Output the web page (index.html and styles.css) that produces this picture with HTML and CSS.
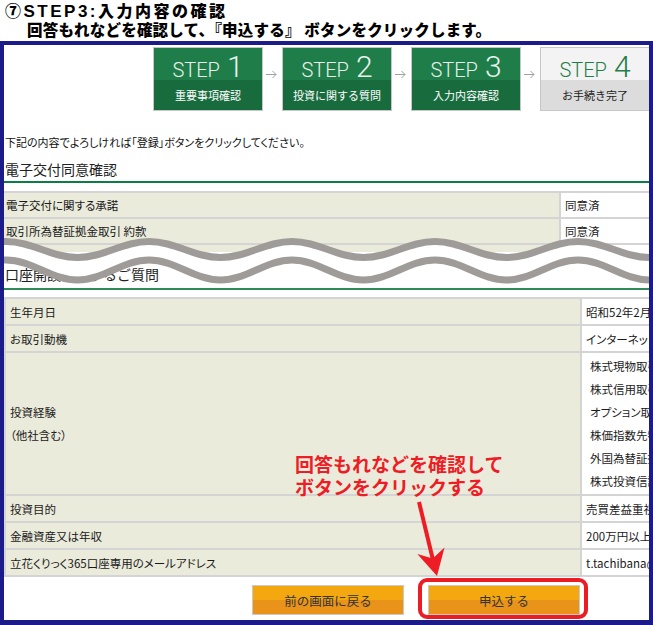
FILE: index.html
```html
<!DOCTYPE html>
<html lang="ja">
<head>
<meta charset="utf-8">
<title>STEP3 入力内容の確認</title>
<link rel="stylesheet" href="styles.css">
</head>
<body>
<header class="title">
  <div class="t-line1">⑦<span class="t-latin">STEP3:</span>入力内容の確認</div>
  <div class="t-line2">回答もれなどを確認して、『申込する』 ボタンをクリックします。</div>
</header>
<main class="frame">
  <div class="steps">
    <div class="step"><div class="step-top"><span class="step-word">STEP</span>1</div><div class="step-bottom">重要事項確認</div></div>
    <svg class="step-arrow" viewBox="0 0 19 64"><path d="M3 27.5H13M9.5 24L13 27.5L9.5 31" fill="none" stroke="#a0a0a0" stroke-width="1"/></svg>
    <div class="step"><div class="step-top"><span class="step-word">STEP</span>2</div><div class="step-bottom">投資に関する質問</div></div>
    <svg class="step-arrow" viewBox="0 0 19 64"><path d="M3 27.5H13M9.5 24L13 27.5L9.5 31" fill="none" stroke="#a0a0a0" stroke-width="1"/></svg>
    <div class="step"><div class="step-top"><span class="step-word">STEP</span>3</div><div class="step-bottom">入力内容確認</div></div>
    <svg class="step-arrow" viewBox="0 0 19 64"><path d="M3 27.5H13M9.5 24L13 27.5L9.5 31" fill="none" stroke="#a0a0a0" stroke-width="1"/></svg>
    <div class="step todo"><div class="step-top"><span class="step-word">STEP</span>4</div><div class="step-bottom">お手続き完了</div></div>
  </div>

  <p class="intro">下記の内容でよろしければ「登録」ボタンをクリックしてください。</p>

  <h2 class="sec">電子交付同意確認</h2>
  <div class="tbl t1">
    <div class="row"><div class="lab">電子交付に関する承諾</div><div class="val">同意済</div></div>
    <div class="row"><div class="lab">取引所為替証拠金取引 約款</div><div class="val">同意済</div></div>
    <div class="row partial"><div class="lab"></div><div class="val"></div></div>
  </div>

  <h2 class="sec sec2">口座開設に関するご質問</h2>
  <div class="tbl t2">
    <div class="row"><div class="lab">生年月日</div><div class="val">昭和52年2月1日</div></div>
    <div class="row"><div class="lab">お取引動機</div><div class="val">インターネット取引の利便性</div></div>
    <div class="row tall">
      <div class="lab"><div>投資経験<br>（他社含む）</div></div>
      <div class="val list">
        <div>株式現物取引</div>
        <div>株式信用取引</div>
        <div>オプション取引</div>
        <div>株価指数先物取引</div>
        <div>外国為替証拠金取引</div>
        <div>株式投資信託</div>
      </div>
    </div>
    <div class="row"><div class="lab">投資目的</div><div class="val">売買差益重視</div></div>
    <div class="row"><div class="lab">金融資産又は年収</div><div class="val">200万円以上500万円未満</div></div>
    <div class="row"><div class="lab">立花くりっく365口座専用のメールアドレス</div><div class="val">t.tachibana@tachibana-sec.co.jp</div></div>
  </div>

  <div class="actions">
    <button class="btn btn-back" type="button">前の画面に戻る</button>
    <div class="highlight"><button class="btn" type="button">申込する</button></div>
  </div>

  <div class="note">回答もれなどを確認して<br>ボタンをクリックする</div>

  <svg class="overlay" viewBox="4 45 645 575">
    <path d="M-137 250.75C-111 250.75 -91.5 268.75 -65.5 268.75S-20 250.75 6 250.75S51.5 268.75 77.5 268.75S123 250.75 149 250.75S194.5 268.75 220.5 268.75S266 250.75 292 250.75S337.5 268.75 363.5 268.75S409 250.75 435 250.75S480.5 268.75 506.5 268.75S552 250.75 578 250.75S623.5 268.75 649.5 268.75S695 250.75 721 250.75" fill="none" stroke="#ffffff" stroke-width="18"/>
    <path d="M-137 241.5C-111 241.5 -91.5 257.5 -65.5 257.5S-20 241.5 6 241.5S51.5 257.5 77.5 257.5S123 241.5 149 241.5S194.5 257.5 220.5 257.5S266 241.5 292 241.5S337.5 257.5 363.5 257.5S409 241.5 435 241.5S480.5 257.5 506.5 257.5S552 241.5 578 241.5S623.5 257.5 649.5 257.5S695 241.5 721 241.5" fill="none" stroke="#9f9b98" stroke-width="7"/>
    <path d="M-137 260C-111 260 -91.5 280 -65.5 280S-20 260 6 260S51.5 280 77.5 280S123 260 149 260S194.5 280 220.5 280S266 260 292 260S337.5 280 363.5 280S409 260 435 260S480.5 280 506.5 280S552 260 578 260S623.5 280 649.5 280S695 260 721 260" fill="none" stroke="#9f9b98" stroke-width="7"/>
    <line x1="419" y1="502" x2="433" y2="560" stroke="#ee1c25" stroke-width="4"/>
    <polygon points="437,576 417.3,554 432.8,558.5 444.5,547.4" fill="#ee1c25"/>
  </svg>
</main>
</body>
</html>
```

FILE: styles.css
```css
* {
  box-sizing: border-box;
}

body {
  margin: 0;
  width: 653px;
  background: #ffffff;
  color: #111111;
  font-family: "Noto Sans CJK JP", "Noto Sans", sans-serif;
}

.title {
  height: 41px;
  font-weight: 900;
  color: #000000;
  white-space: nowrap;
}

.t-line1 {
  height: 20px;
  padding-left: 5px;
  font-size: 16px;
  line-height: 20px;
  letter-spacing: 2.5px;
}

.t-latin {
  font-family: "Liberation Sans", "Noto Sans CJK JP", sans-serif;
  font-weight: 700;
  font-size: 17px;
  line-height: 1;
}

.t-line2 {
  padding-left: 27px;
  font-size: 15.5px;
  line-height: 19px;
  letter-spacing: 0.2px;
}

.frame {
  position: relative;
  height: 584px;
  border: 4px solid #1b1c8a;
  border-bottom-width: 5px;
  overflow: hidden;
  background: #ffffff;
}

/* steps */
.steps {
  display: flex;
  height: 64px;
  margin-top: 2px;
  padding-left: 149px;
}

.step {
  flex: none;
  display: flex;
  flex-direction: column;
  width: 110px;
  height: 64px;
  border: 1px solid #c6c6c6;
}

.step-top {
  height: 32px;
  padding-top: 4px;
  background: #1f7d49;
  color: #e9f4ed;
  font-family: Roboto, "Liberation Sans", sans-serif;
  font-weight: 300;
  font-size: 30px;
  line-height: 1;
  text-align: center;
  white-space: nowrap;
}

.step-word {
  font-size: 20px;
  margin-right: 7px;
}

.step-bottom {
  flex: 1;
  display: flex;
  align-items: center;
  justify-content: center;
  background: #176b3d;
  color: #ffffff;
  font-size: 11px;
}

.step.todo .step-top {
  background: #f3f3f3;
  color: #1f7d49;
}

.step.todo .step-bottom {
  background: #dcdcdc;
  color: #222222;
}

.step-arrow {
  flex: none;
  width: 19px;
  height: 64px;
}

/* text */
.intro {
  margin: 24px 0 0;
  padding-left: 1px;
  font-size: 11px;
  line-height: 14px;
  font-feature-settings: "palt";
}

.sec {
  margin: 11px 0 0;
  padding: 0 0 3px 1px;
  font-size: 14px;
  font-weight: 400;
  line-height: 18px;
  color: #222222;
  border-bottom: 2px solid #0b7d45;
}

.sec2 {
  margin-top: 13px;
  padding-bottom: 5px;
  border-bottom-color: #2f8a58;
}

/* tables */
.tbl {
  width: 760px;
  border-top: 2px solid #d4d4d4;
}

.row {
  display: flex;
  border-bottom: 2px solid #d4d4d4;
}

.lab,
.val {
  display: flex;
  align-items: center;
  font-size: 11.5px;
  font-feature-settings: "palt";
  color: #1a1a1a;
  white-space: nowrap;
}

.lab {
  flex: none;
  background: #ebebdc;
}

.val {
  flex: 1;
  background: #ffffff;
  padding-left: 4px;
}

.t1 {
  margin-top: 8px;
}

.t1 .row {
  height: 26px;
}

.t1 .lab {
  width: 557px;
  padding-left: 2px;
  border-right: 2px solid #d4d4d4;
}

.t1 .row.partial {
  height: 7px;
  border-bottom: none;
}

.t2 {
  margin-top: 7px;
  border-left: 2px solid #d4d4d4;
}

.t2 .row {
  height: 27px;
}

.t2 .lab {
  width: 576px;
  padding-left: 4px;
  border-right: 2px solid #d4d4d4;
}

.t2 .row.tall {
  height: 143px;
}

.tall .lab {
  line-height: 23px;
}

.val.list {
  display: block;
  padding: 2px 0 0 8px;
  line-height: 23px;
}

/* buttons */
.actions {
  display: flex;
  align-items: flex-start;
  gap: 14px;
  margin-top: 1px;
  padding-left: 248px;
}

.btn {
  width: 152px;
  height: 30px;
  padding: 0;
  border: 1px solid #c9c9c9;
  background: linear-gradient(#f3a80f 0, #f3a80f 50%, #e9931b 50%, #e9931b 100%);
  color: #333333;
  font-family: "Noto Sans CJK JP", "Noto Sans", sans-serif;
  font-size: 12.5px;
}

.btn-back {
  margin-top: 7px;
}

.highlight {
  border: 4px solid #ec1c24;
  border-radius: 9px;
  padding: 3px 4px 0 6px;
}

/* overlays */
.note {
  position: absolute;
  left: 291px;
  top: 407px;
  font-size: 19px;
  font-weight: 700;
  line-height: 23px;
  color: #ee1c25;
  white-space: nowrap;
}

.overlay {
  position: absolute;
  left: 0;
  top: 0;
  width: 645px;
  height: 575px;
  pointer-events: none;
}
```
